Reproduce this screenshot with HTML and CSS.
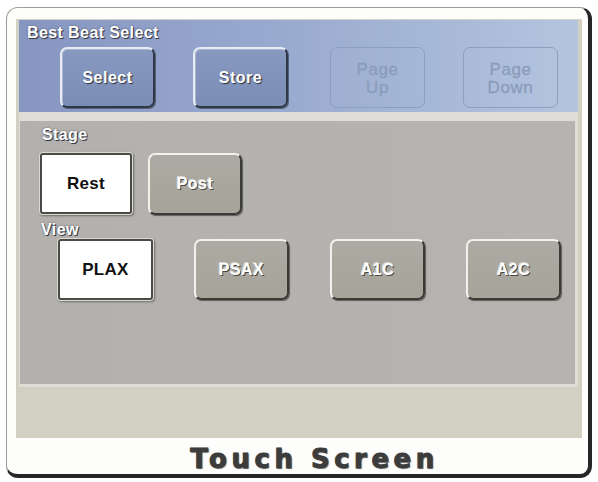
FILE: index.html
```html
<!DOCTYPE html>
<html>
<head>
<meta charset="utf-8">
<title>Touch Screen</title>
<link rel="stylesheet" href="styles.css">
</head>
<body>
<div class="frame">
  <div class="screen">
    <section class="header">
      <div class="label label-light">Best Beat Select</div>
      <div class="row row-header">
        <button class="btn btn-blue">Select</button>
        <button class="btn btn-blue">Store</button>
        <button class="btn btn-off btn-page-up">Page<br>Up</button>
        <button class="btn btn-off">Page<br>Down</button>
      </div>
    </section>
    <div class="panel-wrap">
      <section class="panel">
        <div class="label label-light label-stage">Stage</div>
        <div class="row row-stage">
          <button class="btn btn-on btn-rest">Rest</button>
          <button class="btn btn-grey btn-post">Post</button>
        </div>
        <div class="label label-light label-view">View</div>
        <div class="row row-view">
          <button class="btn btn-on">PLAX</button>
          <button class="btn btn-grey">PSAX</button>
          <button class="btn btn-grey">A1C</button>
          <button class="btn btn-grey">A2C</button>
        </div>
      </section>
    </div>
  </div>
  <div class="caption">Touch Screen</div>
</div>
</body>
</html>
```
FILE: styles.css
```css
html, body {
  margin: 0;
  padding: 0;
  background: #ffffff;
}

body {
  width: 598px;
  height: 482px;
  overflow: hidden;
  font-family: "Liberation Sans", Arial, sans-serif;
}

/* outer bezel with the heavy drop edge on right and bottom */
.frame {
  box-sizing: border-box;
  margin: 7px 6px 0 6px;
  height: 471px;
  background: #fdfdfb;
  border: 1px solid #9c9c98;
  border-right: 4px solid #262626;
  border-bottom: 4px solid #262626;
  border-radius: 12px;
  display: flex;
  flex-direction: column;
}

/* the display area */
.screen {
  margin: 11px 6px 0 9px;
  height: 419px;
  background: #d2cfc3;
  padding: 1px 4px 0 3px;
  box-sizing: border-box;
}

.header {
  height: 92px;
  background: linear-gradient(90deg, #8796c1 0%, #98a9cf 45%, #b3c5de 100%);
  padding: 5px 0 0 8px;
  box-sizing: border-box;
}

.label {
  font-weight: bold;
  font-size: 16px;
  line-height: 16px;
  letter-spacing: 0.4px;
}

.label-light {
  color: #ffffff;
  text-shadow: 1px 1px 0 #3a3a44, 0 0 2px #55555e;
}

.row {
  display: flex;
}

.row-header {
  margin: 6px 0 0 33px;
  gap: 38px;
}

.btn {
  box-sizing: border-box;
  width: 95px;
  height: 61px;
  border-radius: 7px;
  font-family: "Liberation Sans", Arial, sans-serif;
  font-weight: bold;
  font-size: 16px;
  padding: 0;
  display: flex;
  align-items: center;
  justify-content: center;
  text-align: center;
}

.btn-blue {
  background: linear-gradient(180deg, #8799c0, #7b8db5);
  border: 2px solid;
  border-color: #e8ecf4 #2f3846 #2f3846 #e8ecf4;
  box-shadow: 1px 1px 0 #56627a, inset 1px 1px 0 #aab6d0;
  color: #ffffff;
  letter-spacing: 0.5px;
  text-shadow: 1px 1px 1px #2a3040;
}

.btn-off {
  background: transparent;
  border: 1.5px solid #8c9fbf;
  color: #8a9cbb;
  font-weight: normal;
  font-size: 17px;
  line-height: 18px;
  letter-spacing: 0.6px;
  padding-top: 3px;
  -webkit-text-stroke: 0.3px #8a9cbb;
}

.btn-page-up {
  margin-left: 4px;
}

.panel-wrap {
  background: #dedcd4;
  padding: 9px 3px 3px 1px;
}

.panel {
  height: 263px;
  background: linear-gradient(90deg, #b3b1ae, #b5b3b0 60%, #b6b4b0);
  padding: 6px 0 0 20px;
  box-sizing: border-box;
}

.label-stage {
  margin-left: 2px;
}

.row-stage {
  margin-top: 10px;
  gap: 16px;
}

.btn-rest {
  width: 92px;
}

.btn-post {
  width: 94px;
  height: 62px;
}

.label-view {
  margin: 7px 0 0 1px;
}

.row-view {
  margin: 1px 0 0 18px;
  gap: 41px;
}

.btn-on {
  background: #ffffff;
  border: 2px solid #4a4a46;
  box-shadow: 0 0 0 1px #dcdad2, 1px 1px 2px 1px #6e6c66;
  color: #111111;
  border-radius: 3px;
  font-size: 17px;
  letter-spacing: 0.3px;
}

.btn-grey {
  background: linear-gradient(180deg, #acaaa2, #a6a39a);
  border: 2px solid;
  border-color: #f2f1ec #3a3a36 #3a3a36 #f2f1ec;
  box-shadow: 1px 1px 1px #5c5b55;
  color: #ffffff;
  font-size: 16px;
  letter-spacing: 0.5px;
  text-shadow: 1px 1px 0 #4a4944, -1px -1px 0 #d8d6d0;
}

.caption {
  flex: 1;
  display: flex;
  align-items: center;
  justify-content: center;
  padding: 5px 0 0 34px;
  font-family: "DejaVu Sans", sans-serif;
  font-weight: bold;
  font-size: 26px;
  letter-spacing: 4.5px;
  color: #3c3c3c;
  -webkit-text-stroke: 0.8px #3c3c3c;
  text-shadow: 0 0 1px #555555, 1px 1px 1px #8a8a8a;
}
```
